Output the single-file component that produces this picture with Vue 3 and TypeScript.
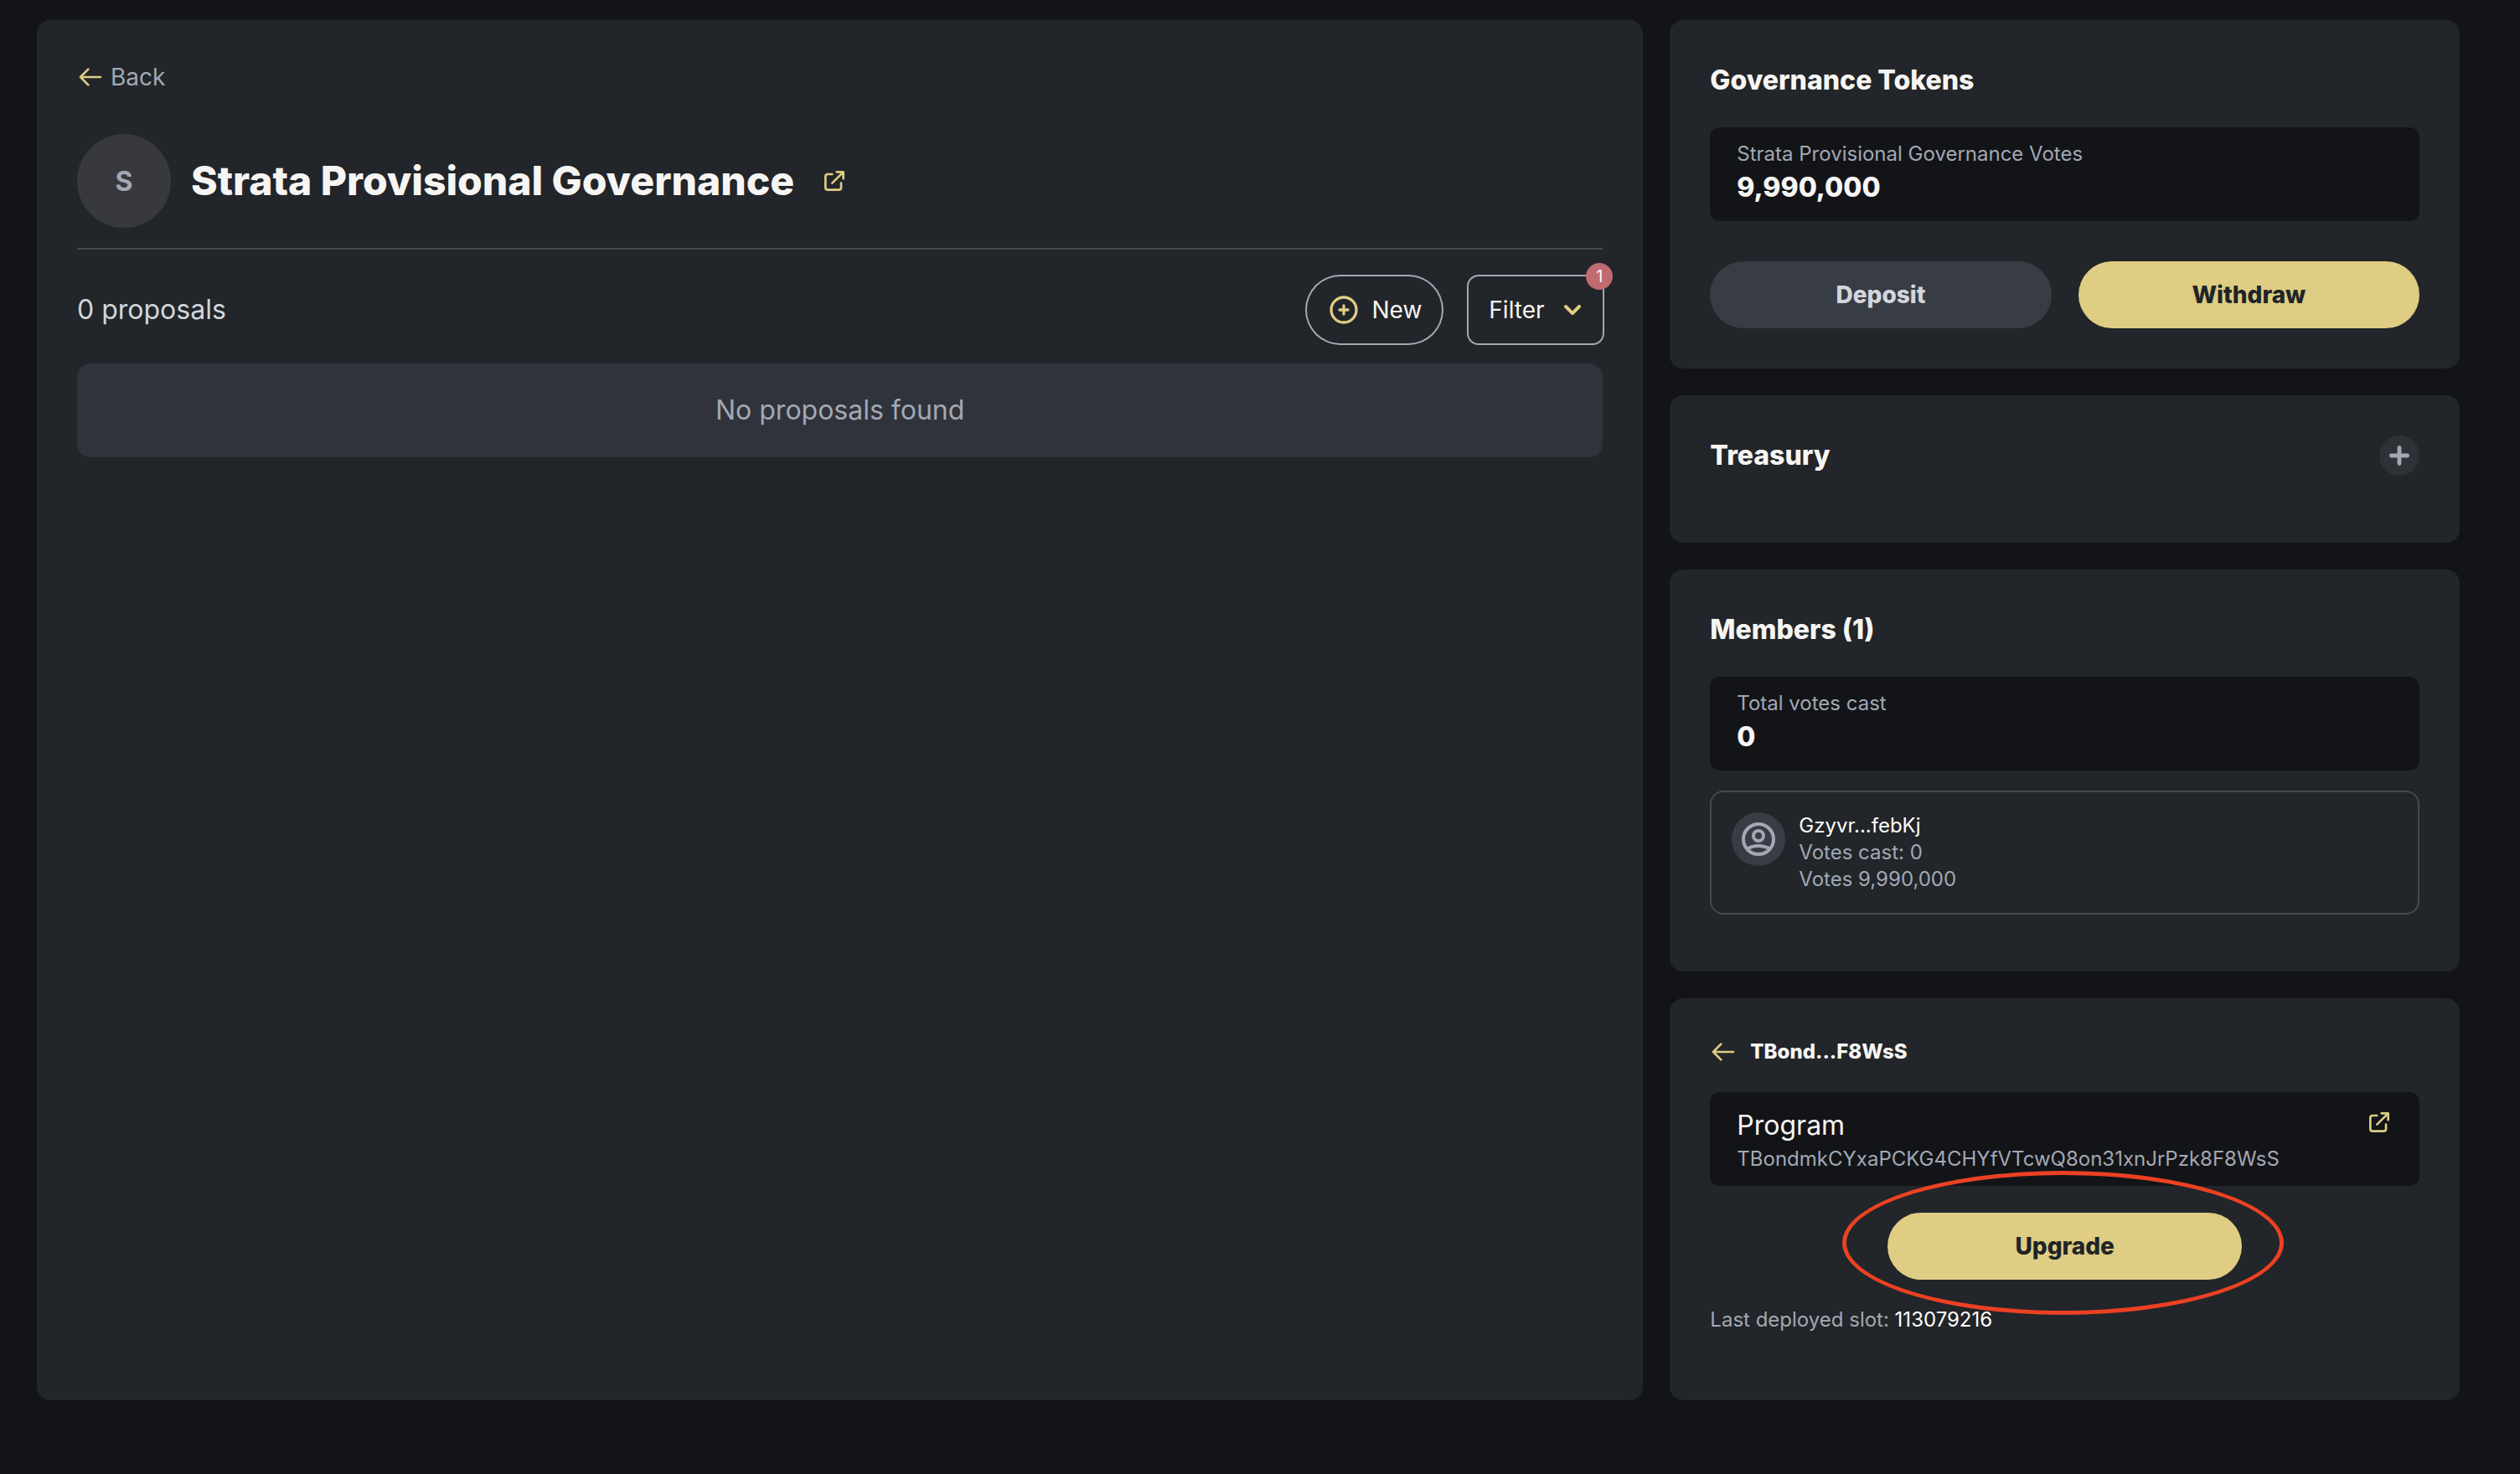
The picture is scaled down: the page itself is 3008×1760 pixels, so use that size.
<script setup lang="ts">
import { ref } from 'vue'

interface Member {
  name: string
  votesCast: number
  votes: number
}

const realm = 'Strata Provisional Governance'
const proposals = ref<string[]>([])
const activeFilters = ref(1)
const depositedVotes = 9990000
const members: Member[] = [{ name: 'Gzyvr...febKj', votesCast: 0, votes: 9990000 }]
const program = {
  shortName: 'TBond...F8WsS',
  address: 'TBondmkCYxaPCKG4CHYfVTcwQ8on31xnJrPzk8F8WsS',
  slot: '113079216',
}

const format = (value: number): string => value.toLocaleString('en-US')
</script>

<template>
  <div class="page">
    <main class="card main">
      <a class="back" href="#">
        <svg class="icon gold" viewBox="0 0 24 24" aria-hidden="true">
          <path d="M10 19l-7-7m0 0l7-7m-7 7h18" />
        </svg>
        Back
      </a>

      <header class="realm">
        <div class="realm-avatar">S</div>
        <h1>{{ realm }}</h1>
        <a class="icon-link" href="#" aria-label="Open website">
          <svg class="icon gold" viewBox="0 0 24 24" aria-hidden="true">
            <path d="M10 6H6a2 2 0 00-2 2v10a2 2 0 002 2h10a2 2 0 002-2v-4M14 4h6m0 0v6m0-6L10 14" />
          </svg>
        </a>
      </header>

      <div class="toolbar">
        <span class="count">{{ proposals.length }} proposals</span>
        <div class="actions">
          <button class="outline pill" type="button">
            <svg class="icon-plus gold" viewBox="0 0 24 24" aria-hidden="true">
              <path d="M12 9v3m0 0v3m0-3h3m-3 0H9m12 0a9 9 0 11-18 0 9 9 0 0118 0z" />
            </svg>
            New
          </button>
          <button class="outline filter" type="button">
            Filter
            <svg class="icon-chevron" viewBox="0 0 20 20" aria-hidden="true">
              <path d="M5.293 7.293a1 1 0 011.414 0L10 10.586l3.293-3.293a1 1 0 111.414 1.414l-4 4a1 1 0 01-1.414 0l-4-4a1 1 0 010-1.414z" />
            </svg>
            <span class="badge">{{ activeFilters }}</span>
          </button>
        </div>
      </div>

      <div v-if="proposals.length === 0" class="empty">No proposals found</div>
    </main>

    <aside class="side">
      <section class="card">
        <h2>Governance Tokens</h2>
        <div class="stat">
          <p class="small">{{ realm }} Votes</p>
          <p class="value">{{ format(depositedVotes) }}</p>
        </div>
        <div class="buttons">
          <button class="solid muted" type="button">Deposit</button>
          <button class="solid" type="button">Withdraw</button>
        </div>
      </section>

      <section class="card treasury">
        <h2>Treasury</h2>
        <button class="add" type="button" aria-label="New treasury account">
          <svg viewBox="0 0 20 20" aria-hidden="true">
            <path d="M10 5a1 1 0 011 1v3h3a1 1 0 110 2h-3v3a1 1 0 11-2 0v-3H6a1 1 0 110-2h3V6a1 1 0 011-1z" />
          </svg>
        </button>
      </section>

      <section class="card members">
        <h2>Members ({{ members.length }})</h2>
        <div class="stat">
          <p class="small">Total votes cast</p>
          <p class="value">0</p>
        </div>
        <div v-for="member in members" :key="member.name" class="member">
          <div class="member-avatar">
            <svg viewBox="0 0 24 24" aria-hidden="true">
              <path d="M5.121 17.804A13.937 13.937 0 0112 16c2.5 0 4.847.655 6.879 1.804M15 10a3 3 0 11-6 0 3 3 0 016 0zm6 2a9 9 0 11-18 0 9 9 0 0118 0z" />
            </svg>
          </div>
          <div class="member-info">
            <p class="small bright">{{ member.name }}</p>
            <p class="small">Votes cast: {{ member.votesCast }}</p>
            <p class="small">Votes {{ format(member.votes) }}</p>
          </div>
        </div>
      </section>

      <section class="card program">
        <div class="program-title">
          <a class="icon-link" href="#" aria-label="Back to programs">
            <svg class="icon gold" viewBox="0 0 24 24" aria-hidden="true">
              <path d="M10 19l-7-7m0 0l7-7m-7 7h18" />
            </svg>
          </a>
          <h3>{{ program.shortName }}</h3>
        </div>
        <div class="stat program-stat">
          <div>
            <p class="name">Program</p>
            <p class="small">{{ program.address }}</p>
          </div>
          <a class="icon-link" href="#" aria-label="Open in explorer">
            <svg class="icon gold" viewBox="0 0 24 24" aria-hidden="true">
              <path d="M10 6H6a2 2 0 00-2 2v10a2 2 0 002 2h10a2 2 0 002-2v-4M14 4h6m0 0v6m0-6L10 14" />
            </svg>
          </a>
        </div>
        <div class="upgrade">
          <button class="solid" type="button">Upgrade</button>
          <span class="ring" aria-hidden="true"></span>
        </div>
        <p class="small">Last deployed slot: <span class="bright">{{ program.slot }}</span></p>
      </section>
    </aside>
  </div>
</template>

<style>
body {
  background: #131418;
}
</style>

<style scoped>
.page {
  --gold: #decd83;
  --fg1: #f7f5f3;
  --fg2: #d2d6dc;
  --fg3: #a2a8b4;
  --line: #434a51;
  display: grid;
  grid-template-columns: repeat(12, minmax(0, 1fr));
  gap: 32px;
  padding: 24px 72px 88px 44px;
  font-family: Inter, 'Open Sans', sans-serif;
  font-optical-sizing: none;
  color: var(--fg1);
}

.page * {
  box-sizing: border-box;
}

h1,
h2,
h3,
p {
  margin: 0;
}

button {
  margin: 0;
  border: 0;
  font: inherit;
  font-optical-sizing: none;
  cursor: pointer;
}

.card {
  padding: 48px;
  border-radius: 16px;
  background: #222529;
}

.main {
  grid-column: span 8;
}

.side {
  grid-column: span 4;
  display: flex;
  flex-direction: column;
  gap: 32px;
}

.icon {
  display: block;
  width: 32px;
  height: 32px;
}

.gold {
  fill: none;
  stroke: var(--gold);
  stroke-width: 2;
  stroke-linecap: round;
  stroke-linejoin: round;
}

.back {
  display: inline-flex;
  align-items: center;
  gap: 8px;
  font-size: 28px;
  line-height: 40px;
  color: var(--fg3);
  text-decoration: none;
}

.realm {
  display: flex;
  align-items: center;
  margin-top: 48px;
  padding-bottom: 24px;
  border-bottom: 2px solid var(--line);
}

.realm-avatar {
  display: flex;
  align-items: center;
  justify-content: center;
  width: 112px;
  height: 112px;
  margin-right: 24px;
  border-radius: 50%;
  background: #38393d;
  font-size: 32px;
  font-weight: 700;
  color: var(--fg3);
}

h1 {
  margin-right: 32px;
  font-size: 48px;
  line-height: 64px;
  font-weight: 800;
}

.toolbar {
  display: flex;
  align-items: center;
  justify-content: space-between;
  padding: 32px 0 24px;
}

.count {
  font-size: 32px;
  line-height: 48px;
  color: var(--fg2);
}

.actions {
  display: flex;
  gap: 32px;
}

.outline {
  display: flex;
  align-items: center;
  min-width: 160px;
  height: 80px;
  padding: 0 24px;
  background: transparent;
  box-shadow: 0 0 0 2px var(--fg3);
  font-size: 28px;
  color: var(--fg1);
}

.pill {
  gap: 14px;
  border-radius: 40px;
}

.icon-plus {
  width: 40px;
  height: 40px;
}

.filter {
  position: relative;
  justify-content: space-between;
  padding: 0 16px 0 24px;
  border-radius: 12px;
}

.icon-chevron {
  width: 40px;
  height: 40px;
  fill: var(--gold);
}

.badge {
  position: absolute;
  top: -16px;
  right: -12px;
  width: 32px;
  border-radius: 16px;
  background: #bf6b70;
  font-size: 20px;
  line-height: 32px;
  text-align: center;
}

.empty {
  padding: 32px;
  border-radius: 16px;
  background: #30333b;
  font-size: 32px;
  line-height: 48px;
  text-align: center;
  color: var(--fg3);
}

h2 {
  margin-bottom: 32px;
  font-size: 32px;
  line-height: 48px;
  font-weight: 800;
}

.stat {
  padding: 16px 32px;
  border-radius: 12px;
  background: #131418;
}

.small {
  font-size: 24px;
  line-height: 32px;
  color: var(--fg3);
}

.bright {
  color: #ffffff;
}

.value,
.name {
  font-size: 32px;
  line-height: 48px;
}

.value {
  font-weight: 800;
}

.buttons {
  display: flex;
  gap: 32px;
  margin-top: 48px;
}

.solid {
  flex: 1;
  height: 80px;
  border-radius: 40px;
  background: var(--gold);
  font-size: 28px;
  font-weight: 800;
  color: #202428;
}

.muted {
  background: #383c44;
  color: var(--fg2);
}

.treasury {
  display: flex;
  justify-content: space-between;
}

.add {
  width: 48px;
  height: 48px;
  padding: 0;
  border-radius: 50%;
  background: #2e3136;
}

.add svg {
  display: block;
  fill: var(--fg3);
}

.members {
  padding-bottom: 68px;
}

.member {
  display: flex;
  gap: 16px;
  margin-top: 24px;
  padding: 24px;
  border: 2px solid var(--line);
  border-radius: 16px;
}

.member-avatar {
  display: flex;
  align-items: center;
  justify-content: center;
  width: 64px;
  height: 64px;
  border-radius: 50%;
  background: #383c44;
}

.member-avatar svg {
  width: 48px;
  height: 48px;
  fill: none;
  stroke: var(--fg3);
  stroke-width: 2;
  stroke-linecap: round;
  stroke-linejoin: round;
}

.program {
  padding-bottom: 80px;
}

.program-title {
  display: flex;
  align-items: center;
  gap: 16px;
  margin-bottom: 32px;
}

h3 {
  font-size: 24px;
  line-height: 32px;
  font-weight: 800;
}

.program-stat {
  display: flex;
  justify-content: space-between;
}

.program-stat .icon-link {
  padding-top: 4px;
}

.upgrade {
  position: relative;
  display: flex;
  width: 50%;
  margin: 32px auto;
}

.ring {
  position: absolute;
  inset: -50px -50px -42px -54px;
  border: 5px solid #ec4123;
  border-radius: 50%;
  pointer-events: none;
}
</style>
